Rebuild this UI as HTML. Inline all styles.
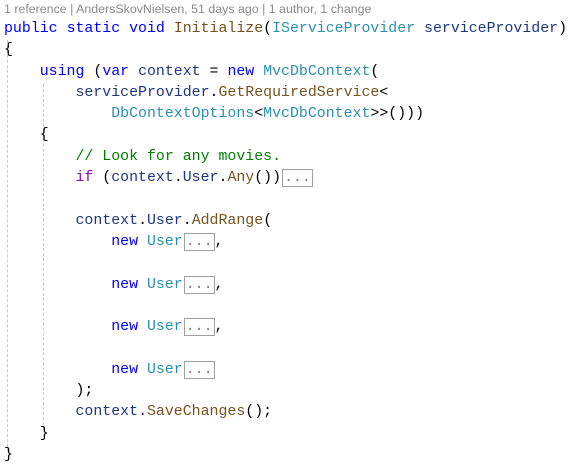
<!DOCTYPE html>
<html><head><style>
body{margin:0;background:#fff;width:574px;height:467px;overflow:hidden;position:relative}
.hdr{position:absolute;left:4px;top:2px;font:12.4px "Liberation Sans",sans-serif;color:#8a8a8a;white-space:nowrap}
pre{position:absolute;left:4px;top:19px;margin:0;font:14.9px/21.3px "Liberation Mono",monospace;color:#000;letter-spacing:0}
.k{color:#0000ff}.t{color:#2b91af}.m{color:#74531f}.v{color:#1f377f}.c{color:#008000}.p{color:#8f08c4}
.b{border:1px solid #a0a0a0;color:#808080;padding:0 1px;margin-left:1px}
.g{position:absolute;width:0;border-left:1px dashed #c8c8c8}
</style></head><body>
<div class="hdr">1 reference | AndersSkovNielsen, 51 days ago | 1 author, 1 change</div>
<div class="g" style="left:7px;top:40px;height:412px"></div>
<div class="g" style="left:43px;top:84px;height:346px"></div>
<pre><span class="k">public</span> <span class="k">static</span> <span class="k">void</span> <span class="m">Initialize</span>(<span class="t">IServiceProvider</span> <span class="v">serviceProvider</span>)
{
    <span class="k">using</span> (<span class="k">var</span> <span class="v">context</span> = <span class="k">new</span> <span class="t">MvcDbContext</span>(
        <span class="v">serviceProvider</span>.<span class="m">GetRequiredService</span>&lt;
            <span class="t">DbContextOptions</span>&lt;<span class="t">MvcDbContext</span>&gt;&gt;()))
    {
        <span class="c">// Look for any movies.</span>
        <span class="p">if</span> (<span class="v">context</span>.<span class="v">User</span>.<span class="m">Any</span>())<span class="b">...</span>

        <span class="v">context</span>.<span class="v">User</span>.<span class="m">AddRange</span>(
            <span class="k">new</span> <span class="t">User</span><span class="b">...</span>,

            <span class="k">new</span> <span class="t">User</span><span class="b">...</span>,

            <span class="k">new</span> <span class="t">User</span><span class="b">...</span>,

            <span class="k">new</span> <span class="t">User</span><span class="b">...</span>
        );
        <span class="v">context</span>.<span class="m">SaveChanges</span>();
    }
}</pre>
</body></html>
